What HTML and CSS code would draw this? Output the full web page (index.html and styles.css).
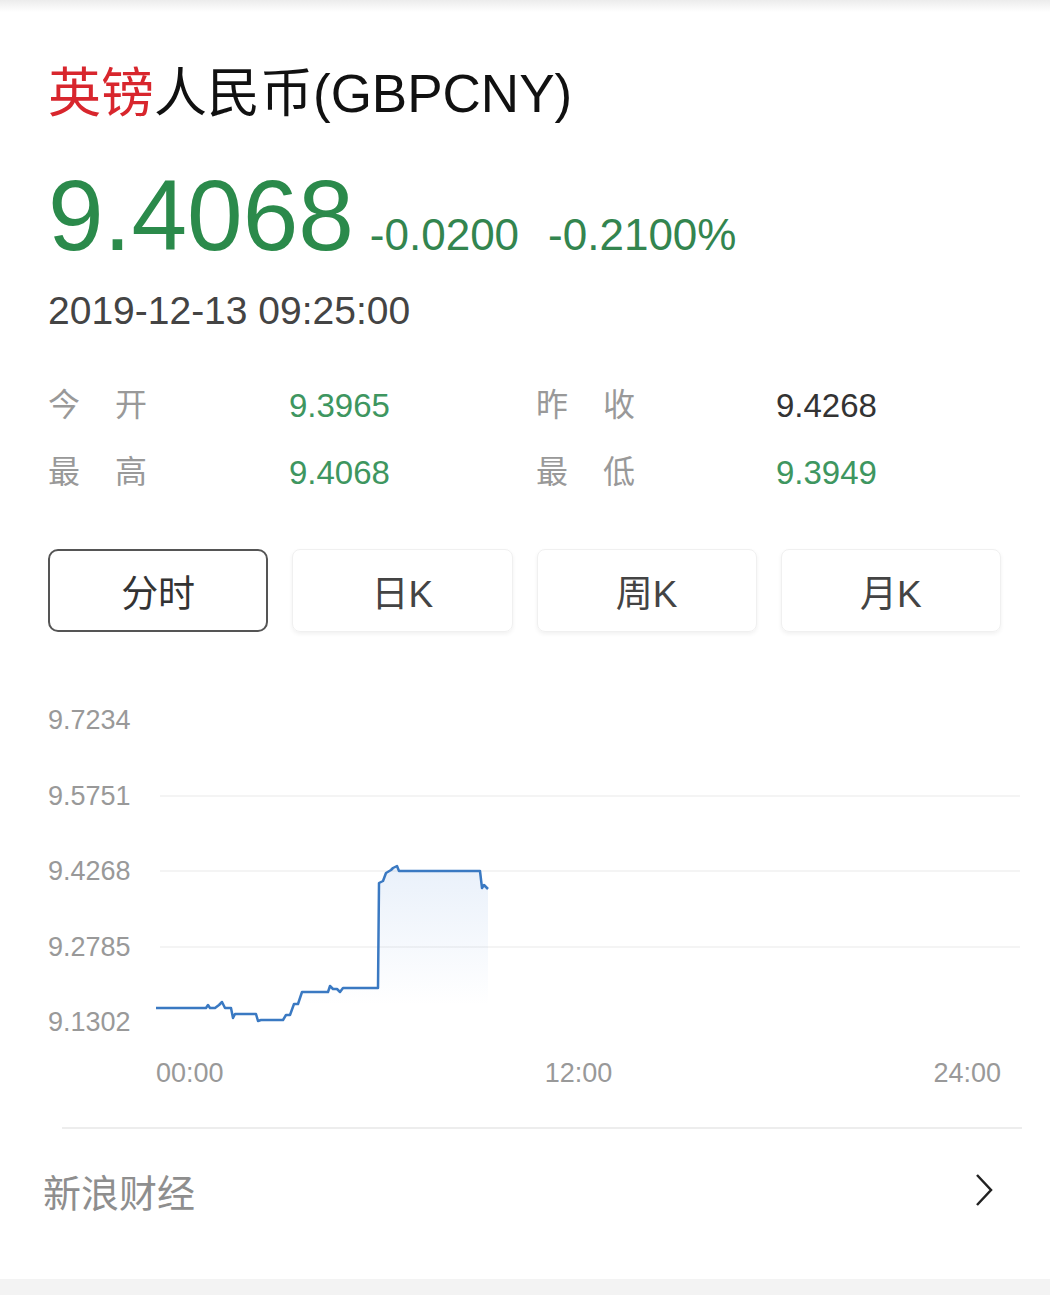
FILE: index.html
```html
<!DOCTYPE html>
<html lang="zh-CN">
<head>
  <meta charset="UTF-8">
  <meta name="viewport" content="width=device-width, initial-scale=1.0">
  <title>英镑人民币(GBPCNY)</title>
  <link rel="stylesheet" href="styles.css">
</head>
<body>
  <div class="topbar"></div>

  <div class="quote-card">
    <h1 class="title"><span class="title-red">英镑</span>人民币(GBPCNY)</h1>

    <div class="quote">
      <span class="price">9.4068</span>
      <span class="change">-0.0200</span>
      <span class="change change-pct">-0.2100%</span>
    </div>
    <div class="time">2019-12-13 09:25:00</div>

    <!-- Open / close / high / low -->
    <div class="stats">
      <div class="stat-label"><span>今</span><span>开</span></div>
      <div class="stat-value up">9.3965</div>
      <div class="stat-label"><span>昨</span><span>收</span></div>
      <div class="stat-value">9.4268</div>
      <div class="stat-label"><span>最</span><span>高</span></div>
      <div class="stat-value up">9.4068</div>
      <div class="stat-label"><span>最</span><span>低</span></div>
      <div class="stat-value up">9.3949</div>
    </div>

    <div class="tabs">
      <div class="tab active">分时</div>
      <div class="tab">日K</div>
      <div class="tab">周K</div>
      <div class="tab">月K</div>
    </div>

    <!-- Intraday chart -->
    <div class="chart">
      <div class="y-axis">
        <span>9.7234</span>
        <span>9.5751</span>
        <span>9.4268</span>
        <span>9.2785</span>
        <span>9.1302</span>
      </div>
      <svg class="plot" width="846" height="332" viewBox="156 705 846 332">
        <defs>
          <linearGradient id="area" gradientUnits="userSpaceOnUse" x1="0" y1="866" x2="0" y2="1005">
            <stop offset="0" stop-color="#4a86d8" stop-opacity="0.12"/>
            <stop offset="1" stop-color="#4a86d8" stop-opacity="0"/>
          </linearGradient>
        </defs>
        <g class="grid">
          <line x1="160" y1="796" x2="1020" y2="796"/>
          <line x1="160" y1="871" x2="1020" y2="871"/>
          <line x1="160" y1="947" x2="1020" y2="947"/>
        </g>
        <polygon class="area" points="156,1008 206,1008 208,1005 210,1008 215,1008 219,1005 222,1002 225,1008 231,1008 233,1018 235,1014 256,1014 258,1021 261,1020 283,1020 286,1015 290,1015 294,1004 298,1004 302,992 328,992 330,986 333,989 337,989 340,992 343,988 378,988 379,883 383,881 386,873 391,870 393,868 397,866 399,871 480,871 482,888 484,885 488,889 488,1022 156,1022"/>
        <polyline class="line" points="156,1008 206,1008 208,1005 210,1008 215,1008 219,1005 222,1002 225,1008 231,1008 233,1018 235,1014 256,1014 258,1021 261,1020 283,1020 286,1015 290,1015 294,1004 298,1004 302,992 328,992 330,986 333,989 337,989 340,992 343,988 378,988 379,883 383,881 386,873 391,870 393,868 397,866 399,871 480,871 482,888 484,885 488,889"/>
      </svg>
    </div>
    <div class="x-axis">
      <span>00:00</span>
      <span>12:00</span>
      <span>24:00</span>
    </div>
  </div>

  <div class="divider"></div>
  <div class="source">
    <span class="source-name">新浪财经</span>
    <svg class="chevron" width="20" height="34" viewBox="0 0 20 34">
      <polyline points="3,2 17,17 3,32"/>
    </svg>
  </div>
  <div class="bottom-band"></div>
</body>
</html>
```

FILE: styles.css
```css
body {
  margin: 0;
  padding: 0;
  width: 1050px;
  font-family: 'Liberation Sans', 'Noto Sans CJK SC', sans-serif;
  background-color: #fff;
  color: #222;
  overflow: hidden;
}

.topbar {
  height: 12px;
  background: linear-gradient(#ececec, #fff);
}

.quote-card {
  padding: 0 49px 0 48px;
}

.title {
  margin: 50px 0 0;
  height: 64px;
  font-size: 53px;
  line-height: 64px;
  font-weight: normal;
  color: #111;
  white-space: nowrap;
}

.title-red {
  color: #d8262d;
}

/* Price line */
.quote {
  display: flex;
  align-items: baseline;
  margin-top: 39px;
  height: 100px;
  line-height: 100px;
  color: #2b8a4b;
}

.price {
  font-size: 100px;
}

.change {
  font-size: 44px;
  margin-left: 16px;
  color: #33854f;
}

.change-pct {
  margin-left: 29px;
}

.time {
  margin-top: 22px;
  height: 48px;
  font-size: 39px;
  line-height: 48px;
  color: #444;
}

/* Stats grid */
.stats {
  display: grid;
  grid-template-columns: 241px 247px 240px auto;
  grid-auto-rows: 67px;
  margin-top: 37px;
  line-height: 67px;
}

.stat-label {
  display: flex;
  justify-content: space-between;
  width: 99px;
  font-size: 32px;
  color: #999;
}

.stat-value {
  font-size: 33px;
  color: #333;
}

.stat-value.up {
  color: #3e9660;
}

/* Period tabs */
.tabs {
  display: flex;
  gap: 24px;
  margin-top: 43px;
}

.tab {
  width: 219px;
  height: 81px;
  display: flex;
  align-items: center;
  justify-content: center;
  font-size: 37px;
  color: #444;
  border: 1px solid #f0f0f0;
  border-radius: 8px;
  box-shadow: 0 2px 4px rgba(0, 0, 0, 0.06);
}

.tab.active {
  width: 217px;
  height: 79px;
  border: 2px solid #555;
  border-radius: 10px;
  box-shadow: none;
  color: #333;
}

/* Chart */
.chart {
  display: grid;
  grid-template-columns: 108px 846px;
  margin-top: 73px;
  height: 332px;
}

.y-axis {
  display: flex;
  flex-direction: column;
  justify-content: space-between;
  font-size: 27px;
  line-height: 30px;
  color: #999;
}

.plot {
  display: block;
  overflow: visible;
}

.grid line {
  stroke: #f4f4f4;
  stroke-width: 2;
}

.area {
  fill: url(#area);
}

.line {
  fill: none;
  stroke: #3a79c2;
  stroke-width: 2.5;
  stroke-linejoin: round;
}

.x-axis {
  display: flex;
  justify-content: space-between;
  margin: 21px 0 0 108px;
  font-size: 27px;
  line-height: 30px;
  color: #999;
}

/* Footer */
.divider {
  margin: 39px 28px 0 62px;
  height: 2px;
  background-color: #ededed;
}

.source {
  display: flex;
  align-items: center;
  justify-content: space-between;
  height: 122px;
  padding: 0 56px 0 43px;
}

.source-name {
  font-size: 38px;
  color: #8e8e8e;
}

.chevron polyline {
  fill: none;
  stroke: #222;
  stroke-width: 2.5;
}

.bottom-band {
  margin-top: 28px;
  height: 16px;
  background-color: #f3f3f3;
}
```
